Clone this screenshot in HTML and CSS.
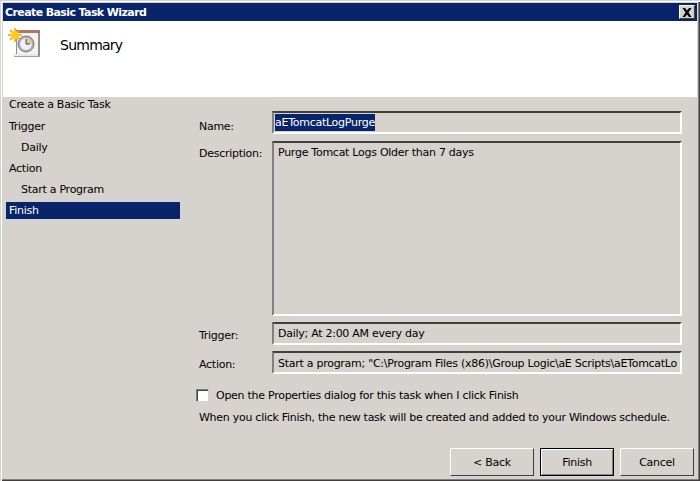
FILE: index.html
```html
<!DOCTYPE html>
<html lang="en">
<head>
<meta charset="utf-8">
<title>Create Basic Task Wizard</title>
<link rel="stylesheet" href="styles.css">
</head>
<body>
<div class="window">
  <header class="titlebar">
    <span class="title">Create Basic Task Wizard</span>
    <button class="close" aria-label="Close">
      <svg width="10" height="9" viewBox="0 0 10 9"><path d="M0.500 0h2.500l2 2.500 2-2.500h2.500L6.500 4.500 9.500 9H7L5 6.500 3 9H0.500l3-4.500z" fill="#000"/></svg>
    </button>
  </header>
  <section class="banner">
    <svg class="task-icon" width="33" height="32" viewBox="0 0 33 32">
      <path d="M8 4h24v3H8z" fill="#a9785f"/>
      <path d="M8 7h24v24H8z" fill="#8f8f8f"/>
      <path d="M9 7h21v21H9z" fill="#f7f3ea"/>
      <path d="M5 28h25v2H5z" fill="#ece8de"/>
      <path d="M6 30h25v1H6z" fill="#a0a0a0"/>
      <circle cx="18" cy="18" r="8" fill="#a4acb6" stroke="#7b8590"/>
      <circle cx="18" cy="18" r="6" fill="#eef1f5"/>
      <path d="M18 18V12A6 6 0 0 1 24 18z" fill="#e8c98c"/>
      <path d="M18 13v5h4" fill="none" stroke="#3f4a5a"/>
      <g stroke="#f5a200" stroke-width="1.500"><path d="M7 2v14M0 9h14M2 4l10 10M12 4L2 14"/></g>
      <circle cx="7" cy="9" r="4" fill="#ffc91f"/>
    </svg>
    <span class="heading">Summary</span>
  </section>
  <main class="body">
    <nav class="steps">
      <div class="step first">Create a Basic Task</div>
      <div class="step">Trigger</div>
      <div class="step sub">Daily</div>
      <div class="step">Action</div>
      <div class="step sub">Start a Program</div>
      <div class="step active">Finish</div>
    </nav>
    <div class="content">
      <div class="row name-row">
        <label class="label">Name:</label>
        <div class="field name-field"><span class="selected">aETomcatLogPurge</span></div>
      </div>
      <div class="row desc-row">
        <label class="label">Description:</label>
        <div class="field desc-field">Purge Tomcat Logs Older than 7 days</div>
      </div>
      <div class="row trigger-row">
        <label class="label">Trigger:</label>
        <div class="field">Daily; At 2:00 AM every day</div>
      </div>
      <div class="row action-row">
        <label class="label">Action:</label>
        <div class="field">Start a program; "C:\Program Files (x86)\Group Logic\aE Scripts\aETomcatLo</div>
      </div>
      <div class="check-row">
        <span class="checkbox"></span>
        <span>Open the Properties dialog for this task when I click Finish</span>
      </div>
      <p class="note">When you click Finish, the new task will be created and added to your Windows schedule.</p>
    </div>
  </main>
  <footer class="buttons">
    <button class="btn">&lt; Back</button>
    <button class="btn default">Finish</button>
    <button class="btn">Cancel</button>
  </footer>
</div>
</body>
</html>
```
FILE: styles.css
```css
* { box-sizing: border-box; }
html, body { margin: 0; padding: 0; }
body {
  width: 700px;
  height: 481px;
  overflow: hidden;
  font-family: "DejaVu Sans", sans-serif;
  font-size: 11px;
  letter-spacing: -0.27px;
  color: #000;
  background: #d6d3ce;
}
.window {
  width: 700px;
  height: 481px;
  display: flex;
  flex-direction: column;
  background: #d6d3ce;
  padding: 2px 1px 1px 2px;
  box-shadow: inset 1px 1px 0 #d6d3ce, inset 2px 2px 0 #fff, inset -1px -1px 0 #404040, inset -2px -2px 0 #808080;
}
.titlebar {
  height: 18px;
  margin: 1px 2px 0 1px;
  flex: none;
  display: flex;
  align-items: center;
  justify-content: space-between;
  background: #08246b;
  padding: 0 2px;
}
.title { color: #fff; font-weight: bold; font-size: 11px; letter-spacing: -0.6px; }
.close {
  width: 16px;
  height: 14px;
  padding: 0;
  display: flex;
  align-items: center;
  justify-content: center;
  background: #d6d3ce;
  border: 1px solid;
  border-color: #fff #404040 #404040 #fff;
}
.banner {
  height: 76px;
  flex: none;
  margin: 0 2px 0 1px;
  background: #fff;
  display: flex;
  align-items: flex-start;
  padding: 5px 0 0 5px;
}
.task-icon { flex: none; }
.heading { font-size: 14px; letter-spacing: -0.75px; margin: 11px 0 0 19px; }
.body { flex: 1; display: flex; min-height: 0; margin-left: 1px; }
.steps { width: 177px; flex: none; padding: 0 0 0 3px; }
.step { height: 21px; line-height: 21px; padding-left: 3px; }
.step.first { height: 19px; line-height: 15px; }
.step.sub { padding-left: 15px; }
.step.active { height: 17px; line-height: 17px; margin-top: 2px; background: #08246b; color: #fff; }
.content { flex: 1; padding: 14px 17px 0 19px; min-width: 0; }
.row { display: flex; align-items: flex-start; }
.label { width: 73px; flex: none; padding-top: 9px; }
.field {
  flex: 1;
  min-width: 0;
  height: 23px;
  padding: 3px 4px 0 4px;
  white-space: nowrap;
  overflow: hidden;
  border: 2px solid;
  border-color: #404040 #fff #fff #808080;
  outline: 0;
}
.name-field { padding: 3px 0 0 1px; }
.selected { background: #08246b; color: #fff; padding: 2px 0; }
.desc-row { margin-top: 7px; }
.desc-row .label { padding-top: 6px; }
.desc-field { height: 175px; }
.trigger-row { margin-top: 6px; }
.trigger-row .label { padding-top: 7px; }
.action-row { margin-top: 6px; }
.action-row .label { padding-top: 7px; }
.action-row .field { padding-top: 4px; }
.check-row { display: flex; align-items: center; gap: 7px; margin: 15px 0 0 -3px; }
.checkbox {
  width: 13px;
  height: 13px;
  background: #fff;
  border: 1px solid;
  border-color: #808080 #d6d3ce #d6d3ce #808080;
  box-shadow: inset 1px 1px 0 #404040;
}
.note { margin: 9px 0 0; }
.buttons { flex: none; display: flex; justify-content: flex-end; gap: 6px; padding: 0 5px 4px 0; }
.btn {
  width: 74px;
  height: 28px;
  padding: 0;
  font: inherit;
  letter-spacing: inherit;
  background: #d6d3ce;
  border: 1px solid;
  border-color: #fff #404040 #404040 #fff;
}
.btn:first-child { width: 84px; }
.btn.default { border: 1px solid #000; box-shadow: inset 1px 1px 0 #fff, inset -1px -1px 0 #808080; }
```
